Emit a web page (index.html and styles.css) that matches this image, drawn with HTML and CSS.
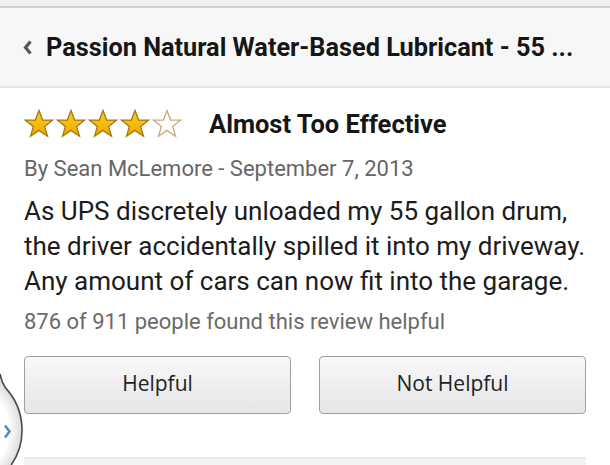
FILE: index.html
```html
<!DOCTYPE html>
<html>
<head>
<meta charset="utf-8">
<link rel="stylesheet" href="styles.css">
</head>
<body>
<div class="topstrip"></div>
<header class="header">
  <svg class="back" width="11" height="15" viewBox="0 0 11 15"><path d="M8.5 1.5 L3.5 7.5 L8.5 13.5" fill="none" stroke="#555" stroke-width="3.2"/></svg>
  <h1 class="title">Passion Natural Water-Based Lubricant - 55 ...</h1>
</header>
<main class="review">
  <div class="rating-row">
    <div class="stars">
      <svg width="160" height="30" viewBox="0 0 160 30">
        <defs>
          <linearGradient id="g" x1="0" y1="0" x2="0" y2="1">
            <stop offset="0" stop-color="#ffd21a"/>
            <stop offset="1" stop-color="#f0a400"/>
          </linearGradient>
          <path id="s" d="M15 1.5 L18.6 11 L28.6 11.2 L20.6 17.4 L23.5 27.2 L15 21.4 L6.5 27.2 L9.4 17.4 L1.4 11.2 L11.4 11 Z"/>
        </defs>
        <use href="#s" x="0" fill="url(#g)" stroke="#a07a10" stroke-width="1.3"/>
        <use href="#s" x="32" fill="url(#g)" stroke="#a07a10" stroke-width="1.3"/>
        <use href="#s" x="64" fill="url(#g)" stroke="#a07a10" stroke-width="1.3"/>
        <use href="#s" x="96" fill="url(#g)" stroke="#a07a10" stroke-width="1.3"/>
        <use href="#s" x="128" fill="#fff" stroke="#c8aa78" stroke-width="1.3"/>
      </svg>
    </div>
    <h2 class="review-title">Almost Too Effective</h2>
  </div>
  <p class="byline">By Sean McLemore - September 7, 2013</p>
  <p class="body">As UPS discretely unloaded my 55 gallon drum, the driver accidentally spilled it into my driveway. Any amount of cars can now fit into the garage.</p>
  <p class="helpful-count">876 of 911 people found this review helpful</p>
  <div class="buttons">
    <button class="btn">Helpful</button>
    <button class="btn">Not Helpful</button>
  </div>
  <div class="next-bar"></div>
</main>
<svg class="side-tab" width="26" height="97" viewBox="0 0 26 97">
  <defs>
    <radialGradient id="tabshade" gradientUnits="userSpaceOnUse" cx="-40" cy="62" r="62">
      <stop offset="0.78" stop-color="#ffffff"/>
      <stop offset="1" stop-color="#dcdcdc"/>
    </radialGradient>
  </defs>
  <path d="M0 6 Q1.5 14 5.5 19.9 A62 62 0 0 1 11.2 97 L0 97 Z" fill="url(#tabshade)"/>
  <path d="M0 6 Q1.5 14 5.5 19.9 A62 62 0 0 1 11.2 97" fill="none" stroke="#4a4a4a" stroke-width="1.6"/>
  <path d="M5 57.5 L9.5 63.5 L5 69.5" fill="none" stroke="#4a8db5" stroke-width="2.5"/>
</svg>
</body>
</html>
```
FILE: styles.css
```css
html, body {
  margin: 0;
  padding: 0;
  background: #fff;
  width: 610px;
  height: 465px;
  overflow: hidden;
  font-family: Roboto, "Liberation Sans", sans-serif;
  position: relative;
}
.topstrip {
  height: 6px;
  background: #efefef;
  border-bottom: 2px solid #cfcfcf;
}
.header {
  height: 78px;
  background: #f7f7f7;
  border-bottom: 2px solid #e6e6e6;
  display: flex;
  align-items: center;
  padding-left: 22px;
  gap: 13px;
}
.back { flex: none; margin-top: 1px; }
.title {
  margin: 0;
  font-size: 25.3px;
  font-weight: 700;
  color: #161616;
  white-space: nowrap;
}
.review {
  padding: 0 24px;
}
.rating-row {
  display: flex;
  align-items: center;
  margin-top: 20px;
  height: 32px;
}
.stars { flex: none; height: 30px; }
.stars svg { display: block; }
.review-title {
  margin: 0 0 0 25px;
  font-size: 25.5px;
  font-weight: 700;
  color: #161616;
}
.byline {
  margin: 15px 0 0;
  font-size: 22px;
  color: #666;
  line-height: 28px;
}
.body {
  margin: 11px -6px 0 0;
  font-size: 26px;
  line-height: 35px;
  color: #1c1c1c;
}
.helpful-count {
  margin: 9px 0 0;
  font-size: 22px;
  line-height: 28px;
  color: #6a6a6a;
}
.buttons {
  display: flex;
  gap: 28px;
  margin-top: 20px;
}
.btn {
  flex: 1;
  height: 58px;
  border: 1px solid #a0a0a0;
  border-radius: 4px;
  background: linear-gradient(#f8f8f9, #e6e6e8);
  font-family: "Open Sans", Roboto, sans-serif;
  font-size: 21px;
  color: #222;
  padding: 0 0 4px;
}
.next-bar {
  margin-top: 43px;
  height: 6px;
  background: #f3f3f3;
  border-top: 2px solid #e8e8e8;
}
.side-tab {
  position: absolute;
  left: 0;
  top: 368px;
  display: block;
}
```
